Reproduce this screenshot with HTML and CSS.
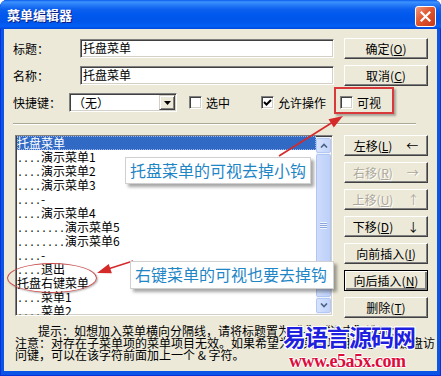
FILE: index.html
```html
<!DOCTYPE html>
<html lang="zh-CN">
<head>
    <meta charset="UTF-8">
    <title>菜单编辑器</title>
    <link rel="stylesheet" href="styles.css">
</head>
<body>

<div class="window">
    <!-- Title bar -->
    <div class="titlebar">
        <span class="title">菜单编辑器</span>
        <span class="close">
            <svg width="11" height="11" viewBox="0 0 11 11"><path d="M1.5 1.5 L9.5 9.5 M9.5 1.5 L1.5 9.5" stroke="#fff" stroke-width="2.2" stroke-linecap="square"/></svg>
        </span>
    </div>

    <div class="client">
        <!-- Top fields -->
        <div class="top">
            <div class="fields">
                <div class="row">
                    <span class="lbl">标题：</span>
                    <div class="edit">托盘菜单</div>
                </div>
                <div class="row">
                    <span class="lbl">名称：</span>
                    <div class="edit">托盘菜单</div>
                </div>
                <div class="row row-opts">
                    <span class="lbl lbl-short">快捷键：</span>
                    <div class="combo">
                        <span class="combo-text">（无）</span>
                        <span class="drop">
                            <svg width="7" height="4" viewBox="0 0 7 4"><path d="M0 0 H7 L3.5 4 Z" fill="#000"/></svg>
                        </span>
                    </div>
                    <span class="check check-1"><span class="box"></span>选中</span>
                    <span class="check check-2">
                        <span class="box">
                            <svg width="9" height="9" viewBox="0 0 9 9"><path d="M1 4 L3.5 6.5 L8 2" fill="none" stroke="#000" stroke-width="2"/></svg>
                        </span>允许操作
                    </span>
                    <span class="check check-3"><span class="box"></span>可视</span>
                </div>
            </div>
            <div class="btn-col">
                <div class="btn">确定(<u>O</u>)</div>
                <div class="btn">取消(<u>C</u>)</div>
            </div>
        </div>

        <div class="sep"></div>

        <!-- Menu tree + side buttons -->
        <div class="middle">
            <div class="listbox">
                <div class="tree">
                    <div class="item sel">托盘菜单</div>
                    <div class="item"><span class="dots">....</span>演示菜单1</div>
                    <div class="item"><span class="dots">....</span>演示菜单2</div>
                    <div class="item"><span class="dots">....</span>演示菜单3</div>
                    <div class="item"><span class="dots">....</span>-</div>
                    <div class="item"><span class="dots">....</span>演示菜单4</div>
                    <div class="item"><span class="dots">........</span>演示菜单5</div>
                    <div class="item"><span class="dots">........</span>演示菜单6</div>
                    <div class="item"><span class="dots">....</span>-</div>
                    <div class="item"><span class="dots">....</span>退出</div>
                    <div class="item">托盘右键菜单</div>
                    <div class="item"><span class="dots">....</span>菜单1</div>
                    <div class="item"><span class="dots">....</span>菜单2</div>
                </div>
                <div class="vscroll">
                    <span class="sbtn">
                        <svg width="8" height="5" viewBox="0 0 8 5"><path d="M1 4.5 L4 1.5 L7 4.5" fill="none" stroke="#4D6185" stroke-width="1.6"/></svg>
                    </span>
                    <span class="thumb"><span class="grip"></span></span>
                    <span class="sbtn">
                        <svg width="8" height="5" viewBox="0 0 8 5"><path d="M1 0.5 L4 3.5 L7 0.5" fill="none" stroke="#4D6185" stroke-width="1.6"/></svg>
                    </span>
                </div>
            </div>
            <div class="btn-col side">
                <div class="btn"><span>左移(<u>L</u>)</span><span class="arr">←</span></div>
                <div class="btn off"><span>右移(<u>R</u>)</span><span class="arr">→</span></div>
                <div class="btn off"><span>上移(<u>U</u>)</span><span class="arr">↑</span></div>
                <div class="btn"><span>下移(<u>D</u>)</span><span class="arr">↓</span></div>
                <div class="btn">向前插入(<u>I</u>)</div>
                <div class="btn default">向后插入(<u>N</u>)</div>
                <div class="btn">删除(<u>T</u>)</div>
            </div>
        </div>

        <p class="hint"><span class="first">提示：如想加入菜单横向分隔线，请将标题置为“-”。“选中”选项：</span><br>注意：对存在子菜单项的菜单项目无效。如果希望为该菜单项目指定一个键盘访<br>问键，可以在该字符前面加上一个 &amp; 字符。</p>
    </div>

    <!-- Annotations drawn over the screenshot -->
    <div class="mark-rect"></div>
    <div class="mark-oval"></div>
    <svg class="arrows" width="441" height="376" viewBox="0 0 441 376">
        <line x1="279" y1="156" x2="333" y2="122" stroke="#D42A2A" stroke-width="1.6"/>
        <polygon points="343,116 333.8,127.6 328.5,119.2" fill="#D42A2A"/>
        <line x1="133" y1="261" x2="108" y2="269" stroke="#D42A2A" stroke-width="1.6"/>
        <polygon points="97,273 111.9,273.3 108.7,263.9" fill="#D42A2A"/>
    </svg>
    <div class="callout callout-1">托盘菜单的可视去掉小钩</div>
    <div class="callout callout-2">右键菜单的可视也要去掉钩</div>

    <div class="watermark">
        <div class="wm-cn">易语言源码网</div>
        <div class="wm-url">www.e5a5x.com</div>
    </div>
</div>

</body>
</html>
```

FILE: styles.css
```css
/* Reset */
* {
    margin: 0;
    padding: 0;
    box-sizing: border-box;
}

body {
    font-family: "Noto Sans CJK SC", sans-serif;
    font-size: 12px;
    color: #000;
    background: #fff;
}

/* Window frame */
.window {
    position: relative;
    width: 441px;
    height: 376px;
    display: flex;
    flex-direction: column;
    background: #0A55E6;
    border-radius: 7px 7px 0 0;
    box-shadow: inset 1px 0 #0831D9, inset -1px 0 #0831D9, inset 0 -1px #0831D9;
    overflow: hidden;
}

.titlebar {
    height: 29px;
    display: flex;
    align-items: flex-start;
    background: linear-gradient(#0A5BEA 0, #3D93FF 2px, #2D82F8 4px, #0D61EF 9px, #0058EE 15px, #0055EA 22px, #0360F6 26px, #0049DE 29px);
    border-radius: 7px 7px 0 0;
}

.title {
    padding: 6px 0 0 7px;
    color: #fff;
    font-size: 13px;
    font-weight: bold;
    line-height: 17px;
    text-shadow: 1px 1px #0A1A80;
}

.close {
    margin: 6px 5px 0 auto;
    width: 21px;
    height: 21px;
    display: flex;
    align-items: center;
    justify-content: center;
    border: 1px solid #fff;
    border-radius: 3px;
    background: linear-gradient(135deg, #F09A7E, #E0562F 45%, #C7381A);
}

/* Client area */
.client {
    flex: 1;
    margin: 0 4px 5px;
    padding: 9px 9px 0;
    background: #ECE9D8;
    overflow: hidden;
}

.top {
    display: flex;
}

.fields {
    flex: 1;
    min-width: 0;
    display: flex;
    flex-direction: column;
    gap: 6px;
}

.row {
    height: 21px;
    display: flex;
    align-items: center;
    white-space: nowrap;
}

.row-opts > * {
    flex: none;
}

.lbl {
    width: 67px;
    flex: none;
}

.lbl-short {
    width: 56px;
}

.edit {
    flex: 1;
    height: 19px;
    padding: 0 2px;
    line-height: 15px;
    background: #fff;
    border: 1px solid;
    border-color: #808080 #fff #fff #808080;
    box-shadow: inset 1px 1px #404040, inset -1px -1px #D4D0C8;
}

.combo {
    width: 108px;
    height: 19px;
    display: flex;
    align-items: center;
    background: #fff;
    border: 1px solid;
    border-color: #808080 #fff #fff #808080;
    box-shadow: inset 1px 1px #404040, inset -1px -1px #D4D0C8;
    padding: 1px 2px 1px 3px;
}

.combo-text {
    flex: 1;
}

.drop {
    width: 16px;
    height: 15px;
    display: flex;
    align-items: center;
    justify-content: center;
    background: #ECE9D8;
    border: 1px solid;
    border-color: #D4D0C8 #404040 #404040 #D4D0C8;
    box-shadow: inset 1px 1px #fff, inset -1px -1px #808080;
    margin-right: -1px;
}

.check {
    display: flex;
    align-items: center;
    gap: 4px;
}

.check-1 { margin-left: 12px; }
.check-2 { margin-left: 31px; }
.check-3 { margin-left: 14px; }

.box {
    width: 13px;
    height: 13px;
    flex: none;
    display: flex;
    align-items: center;
    justify-content: center;
    background: #fff;
    border: 1px solid;
    border-color: #808080 #fff #fff #808080;
    box-shadow: inset 1px 1px #404040, inset -1px -1px #D4D0C8;
}

/* Buttons */
.btn-col {
    width: 84px;
    flex: none;
    margin-left: 10px;
    display: flex;
    flex-direction: column;
    gap: 6px;
}

.btn {
    height: 21px;
    display: flex;
    align-items: center;
    justify-content: center;
    background: #ECE9D8;
    border: 1px solid;
    border-color: #fff #404040 #404040 #fff;
    box-shadow: inset -1px -1px #808080;
    line-height: 14px;
    white-space: nowrap;
}

.btn .arr {
    margin-left: 14px;
}

.btn.off {
    color: #ACA899;
    text-shadow: 1px 1px #fff;
}

.btn.default {
    border-color: #000;
    box-shadow: inset 1px 1px #fff, inset -2px -2px #808080;
}

.side {
    margin-left: 11px;
}

/* Separator */
.sep {
    margin: 10px 12px 0 0;
    border-top: 1px solid #ACA899;
    border-bottom: 1px solid #fff;
}

/* Menu tree */
.middle {
    display: flex;
    margin-top: 10px;
}

.listbox {
    flex: 1;
    margin-left: 2px;
    height: 181px;
    display: flex;
    background: #fff;
    border: 1px solid;
    border-color: #808080 #fff #fff #808080;
    box-shadow: inset 1px 1px #404040, inset -1px -1px #D4D0C8;
    padding: 1px;
    overflow: hidden;
}

.tree {
    flex: 1;
    margin-top: -1px;
    white-space: nowrap;
}

.item {
    height: 14px;
    line-height: 14px;
}

.item.sel {
    background: #316AC5;
    color: #fff;
    outline: 1px dotted #9DB4E4;
    outline-offset: -1px;
}

.dots {
    font-family: "Liberation Mono", monospace;
    font-size: 10px;
}

.vscroll {
    width: 15px;
    flex: none;
    display: flex;
    flex-direction: column;
    gap: 1px;
    padding: 1px 0;
    background: #EEF2FC;
}

.sbtn {
    height: 15px;
    display: flex;
    align-items: center;
    justify-content: center;
    background: linear-gradient(to right, #D6E3FC, #C1D3FB);
    border: 1px solid #B4C8F6;
    border-radius: 2px;
}

.thumb {
    flex: 1;
    display: flex;
    align-items: center;
    justify-content: center;
    background: linear-gradient(to right, #CEDBFB, #BCD0FA);
    border: 1px solid #B0C6F4;
    border-radius: 2px;
}

.grip {
    width: 7px;
    height: 7px;
    background: repeating-linear-gradient(#EEF4FE 0 1px, #8CA6DC 1px 2px);
}

/* Hint text */
.hint {
    margin: 7px 0 0 2px;
    line-height: 12px;
    white-space: nowrap;
}

.hint .first {
    padding-left: 23px;
}

/* Annotations */
.mark-rect {
    position: absolute;
    left: 334px;
    top: 87px;
    width: 60px;
    height: 27px;
    border: 2px solid #D8393B;
    box-shadow: 2px 2px 2px rgba(0, 0, 0, 0.3);
}

.mark-oval {
    position: absolute;
    left: 7px;
    top: 263px;
    width: 90px;
    height: 30px;
    border: 1.5px solid #C84848;
    border-radius: 50%;
    box-shadow: 1px 1px 2px rgba(0, 0, 0, 0.3);
}

.arrows {
    position: absolute;
    left: 0;
    top: 0;
    pointer-events: none;
}

.callout {
    position: absolute;
    height: 27px;
    padding-left: 4px;
    background: #fff;
    border: 1px solid #D0D0D0;
    box-shadow: 3px 3px 3px rgba(0, 0, 0, 0.35);
    color: #1F86C6;
    font-size: 16px;
    line-height: 25px;
    white-space: nowrap;
}

.callout-1 {
    left: 125px;
    top: 157px;
    width: 186px;
}

.callout-2 {
    left: 130px;
    top: 261px;
    width: 204px;
    height: 28px;
}

/* Site watermark */
.watermark {
    position: absolute;
    left: 283px;
    top: 325px;
    pointer-events: none;
}

.wm-cn {
    font-size: 23px;
    font-weight: bold;
    line-height: 23px;
    letter-spacing: -1px;
    color: #1F1FE0;
    text-shadow: 1px 0 #fff, -1px 0 #fff, 0 1px #fff, 0 -1px #fff, 1px 1px #fff, -1px -1px #fff, 1px -1px #fff, -1px 1px #fff;
}

.wm-url {
    margin: 4px 0 0 6px;
    font-family: "Liberation Serif", serif;
    font-size: 18px;
    font-weight: bold;
    line-height: 18px;
    letter-spacing: -0.5px;
    color: #DC0C3C;
    text-shadow: 1px 0 #fff, -1px 0 #fff, 0 1px #fff, 0 -1px #fff;
}
```
